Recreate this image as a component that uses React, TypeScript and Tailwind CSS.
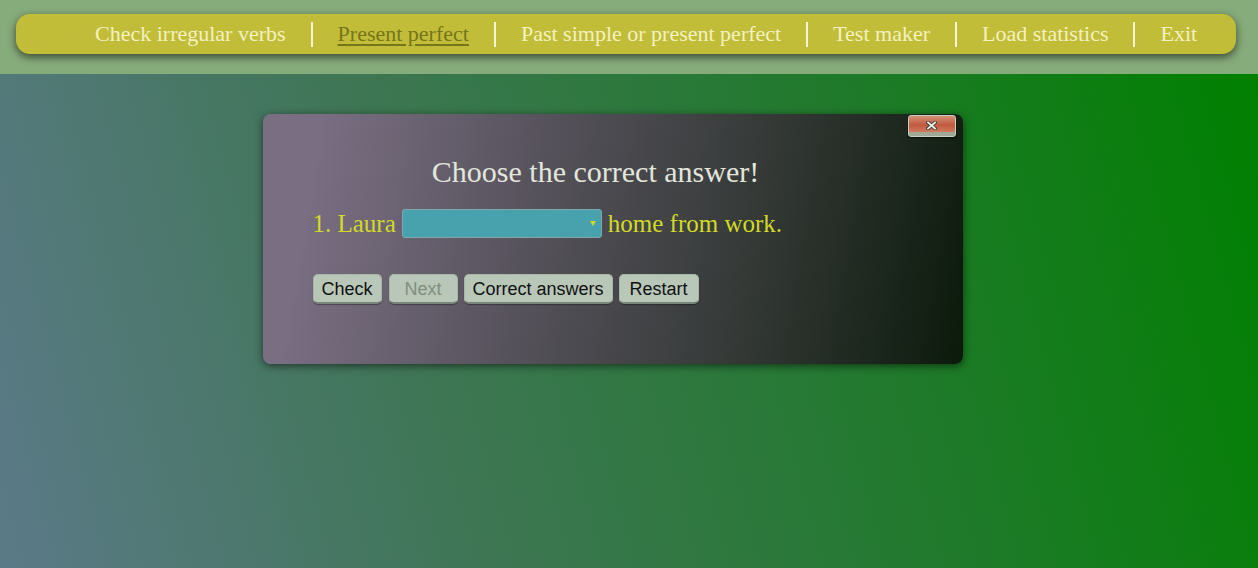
const NAV = ['Check irregular verbs', 'Present perfect', 'Past simple or present perfect', 'Test maker', 'Load statistics', 'Exit']

function NavBar() {
  return (
    <div className="h-[74px] bg-[#87ac7b] pl-4 pr-[22px] pt-[14px]">
      <div className="flex h-[40px] items-center rounded-[14px] bg-[#c2bd38] pl-[79px] shadow-[0_3px_8px_rgba(0,0,0,0.6)]">
        {NAV.map((label, i) => (
          <div key={label} className="flex items-center">
            {i > 0 && <span className="mx-[25px] h-[25px] w-[2px] bg-[#f4f4d8]" />}
            <span
              className={
                i === 1
                  ? 'text-[22px] leading-none text-[#75751c] underline underline-offset-[3px]'
                  : 'text-[22px] leading-none text-[#f3f1c2]'
              }
            >
              {label}
            </span>
          </div>
        ))}
      </div>
    </div>
  )
}

function Btn({ children, disabled, className = '' }: { children: string; disabled?: boolean; className?: string }) {
  return (
    <button
      type="button"
      className={`h-[30px] min-w-[69px] rounded-[5px] border border-[#a8b6a8] border-b-[2px] border-b-[#78847a] bg-[#b8c7b8] px-[8px] text-[18px] font-['Liberation_Sans',Arial,sans-serif] leading-none shadow-[0_1px_1px_rgba(0,0,0,0.35)] ${
        disabled ? 'text-[#7f8f7f]' : 'text-[#111]'
      } ${className}`}
    >
      {children}
    </button>
  )
}

export default function App() {
  return (
    <div className="flex h-[568px] w-full flex-col overflow-hidden font-['Liberation_Serif','Times_New_Roman',serif]">
      <NavBar />
      <div className="flex flex-1 justify-center bg-[linear-gradient(75deg,#5b7a88_0%,#3e7654_35%,#1f7a2a_70%,#008000_100%)] pt-[40px]">
        <div className="ml-[-33px] flex h-[250px] w-[700px] flex-col rounded-[8px] bg-[linear-gradient(100deg,#7a6e82_8%,#5a5560_35%,#333835_70%,#0b1a0b_100%)] shadow-[0_2px_8px_rgba(0,0,0,0.55)]">
          <div className="flex justify-end pr-[7px] pt-[1px]">
            <button
              type="button"
              className="flex h-[22px] w-[48px] items-center justify-center rounded-[3px] border border-[#c8d0c0] bg-[linear-gradient(180deg,#d49078_0%,#c05a40_45%,#d0785c_78%,#a0a898_80%)] shadow-[0_1px_2px_rgba(0,0,0,0.6)]"
            >
              <svg width="11" height="9" viewBox="0 0 11 9" className="mb-[2px]">
                <path d="M2 1.5l7 6M9 1.5l-7 6" stroke="#3a3a34" strokeWidth="3.6" strokeLinecap="square" />
                <path d="M2 1.5l7 6M9 1.5l-7 6" stroke="#eef2e8" strokeWidth="1.8" strokeLinecap="square" />
              </svg>
            </button>
          </div>
          <h1 className="mt-[20px] pr-[34px] text-center text-[30px] leading-none text-[#e2e6dc]">Choose the correct answer!</h1>
          <div className="mt-[22px] flex items-center gap-[6px] pl-[50px] text-[25px] leading-none text-[#d3da25]">
            <span>1. Laura</span>
            <div className="flex h-[29px] w-[200px] items-center justify-end rounded-[3px] border border-[#7fa8ac] bg-[#47a2ad] pr-[5px]">
              <svg width="6" height="5" viewBox="0 0 6 5">
                <path d="M0 0h6L3 5z" fill="#d3da25" />
              </svg>
            </div>
            <span>home from work.</span>
          </div>
          <div className="mt-[36px] flex gap-[6px] pl-[50px]">
            <Btn className="mr-[1px]">Check</Btn>
            <Btn disabled>Next</Btn>
            <Btn>Correct answers</Btn>
            <Btn className="px-[10px]">Restart</Btn>
          </div>
        </div>
      </div>
    </div>
  )
}
